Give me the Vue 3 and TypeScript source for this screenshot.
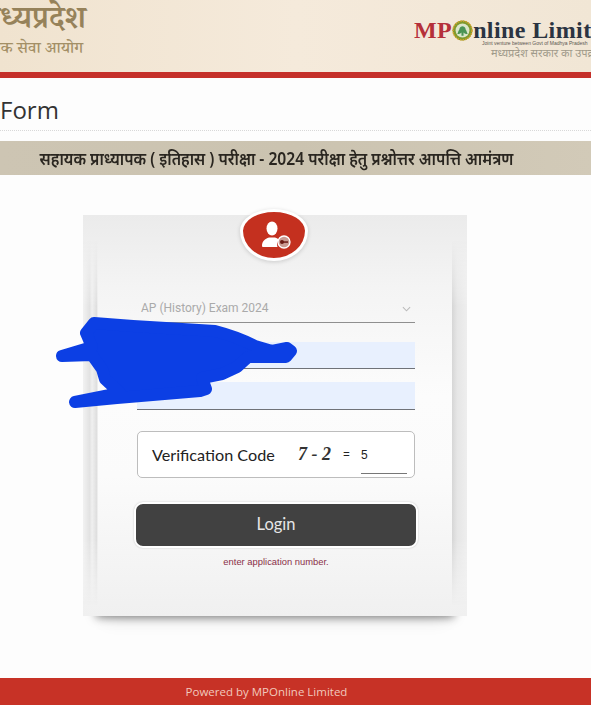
<script setup lang="ts">
const title: string = 'सहायक प्राध्यापक ( इतिहास ) परीक्षा - 2024 परीक्षा हेतु प्रश्नोत्तर आपत्ति आमंत्रण'
</script>

<template>
  <div class="page">
    <header class="top">
      <div class="brand-left">
        <div class="hi-big">मध्यप्रदेश</div>
        <div class="hi-small">लोक सेवा आयोग</div>
      </div>
      <div class="brand-right">
        <div class="mp">
          <span class="red">MP</span>
          <svg class="seal" viewBox="0 0 20 20" aria-hidden="true">
            <circle cx="10" cy="10" r="9.500" fill="#7f9a2c" />
            <circle cx="10" cy="10" r="9" fill="none" stroke="#d3a32e" stroke-width="1.400" stroke-dasharray="1.500 1" />
            <circle cx="10" cy="10" r="6.600" fill="#dbe6cb" />
            <path d="M5 13c1-1 1-3 2-4 0-2 2-3 3-3s3 1 3 3c1 1 1 3 2 4-2 1-3 0-4-1v3H9v-3c-1 1-2 2-4 1z" fill="#4a9455" />
          </svg>
          <span class="navy">nline Limited</span>
        </div>
        <div class="jv">Joint venture between Govt of Madhya Pradesh</div>
        <div class="hi-gov">मध्यप्रदेश सरकार का उपक्रम</div>
      </div>
    </header>

    <h1 class="form-title">Form</h1>

    <div class="band"><span class="band-text">{{ title }}</span></div>

    <main class="stage">
      <section class="card">
        <div class="badge">
          <svg viewBox="0 0 46 30" width="46" height="30" aria-hidden="true">
            <ellipse cx="21" cy="8.500" rx="5.500" ry="7" fill="#fff" />
            <path d="M11 26c0-5 3-7 7-8.500h6c2 .5 3 1.200 4 2.500-2 2-2.500 4-1.500 7H12.500c-1 0-1.500-.3-1.500-1z" fill="#fff" />
            <circle cx="33" cy="22" r="6" fill="#c99a92" stroke="#fff" stroke-width="1.300" />
            <circle cx="31" cy="22" r="2" fill="#6a1a14" />
            <rect x="31.500" y="21.300" width="5.500" height="1.500" fill="#6a1a14" />
          </svg>
        </div>

        <div class="fields">
          <div class="select">
            <span>AP (History) Exam 2024</span>
            <svg class="chev" viewBox="0 0 10 6" width="9" height="6" aria-hidden="true">
              <path d="M1 1l4 4 4-4" fill="none" stroke="#bbb" stroke-width="1.200" />
            </svg>
          </div>
          <div class="input"></div>
          <div class="input second"></div>

          <div class="captcha">
            <span class="cap-label">Verification Code</span>
            <span class="cap-sum">7 - 2</span>
            <span class="cap-eq">=</span>
            <span class="cap-answer">5</span>
          </div>

          <button class="login" type="button">Login</button>
          <p class="error">enter application number.</p>
        </div>
      </section>

      <svg class="scribble" viewBox="0 0 250 100" width="250" height="100" aria-hidden="true">
        <path d="M44 14L83 17L165 22Q188 28 205 37L222 42L237 39L241 42L236 48L198 48L187 58L172 65L152 69L156 80L150 82L67 89L25 93L70 84L55 70L52 60L42 46L12 47L42 38L36 24Z" fill="#0c3fe4" stroke="#0c3fe4" stroke-width="12" stroke-linejoin="round" />
      </svg>
    </main>

    <footer class="foot">Powered by MPOnline Limited</footer>
  </div>
</template>

<style>
html, body { margin: 0; background: #fdfdfd; }
</style>

<style scoped>
.page {
  width: 591px;
  height: 705px;
  overflow: hidden;
  display: flex;
  flex-direction: column;
  background: #fdfdfd;
  font-family: "Noto Sans", "DejaVu Sans", sans-serif;
}
.top {
  height: 72px;
  flex: none;
  display: flex;
  justify-content: space-between;
  border-bottom: 6px solid #c5302a;
  background: linear-gradient(90deg, #f0e3cf 0%, #f5eadb 50%, #f1e6d5 100%);
  overflow: hidden;
}
.brand-left {
  width: 86px;
  padding-top: 3px;
  display: flex;
  flex-direction: column;
  align-items: flex-end;
  white-space: nowrap;
  color: #96825a;
  font-family: "Noto Serif Devanagari", "Noto Sans", "DejaVu Serif", serif;
}
.hi-big { font-size: 32px; line-height: 40px; font-weight: 600; }
.hi-small { font-size: 16.5px; line-height: 15px; font-weight: 500; margin-right: 3px; color: #a38f66; }
.brand-right {
  width: 177px;
  padding-top: 18px;
  white-space: nowrap;
  overflow: hidden;
}
.mp {
  display: flex;
  align-items: center;
  height: 24px;
  font-family: "Liberation Serif", serif;
  font-size: 24px;
  font-weight: 700;
  letter-spacing: 0.4px;
}
.red { color: #b5303a; }
.navy { color: #2b3442; }
.seal { width: 21px; height: 21px; flex: none; }
.jv {
  margin: -2px 0 0 68px;
  font-family: "Liberation Sans", sans-serif;
  font-size: 5px;
  line-height: 6px;
  color: #5a5650;
}
.hi-gov {
  margin-left: 77px;
  font-size: 11px;
  line-height: 13px;
  color: #a09a8a;
}
.form-title {
  margin: 0;
  height: 53px;
  flex: none;
  padding: 14px 0 0;
  box-sizing: border-box;
  border-bottom: 1px dotted #d8d8d8;
  font-size: 24px;
  line-height: 36px;
  font-weight: 400;
  color: #333;
  font-family: "Open Sans", "Noto Sans", sans-serif;
}
.band {
  margin-top: 10px;
  height: 34px;
  flex: none;
  display: flex;
  align-items: center;
  justify-content: center;
  background: linear-gradient(90deg, #cdc5b3 0%, #cbc3b0 50%, #d2cab8 100%);
  color: #2a2620;
  white-space: nowrap;
}
.band-text {
  font-size: 17px;
  font-weight: 600;
  transform: scaleX(0.92);
  flex: none;
  margin-left: -39px;
}
.stage {
  position: relative;
  flex: 1;
  padding: 40px 0 0 83px;
}
.card {
  position: relative;
  width: 384px;
  height: 401px;
  box-sizing: border-box;
  padding: 86px 52px 0 54px;
  background: linear-gradient(180deg, #ebebeb 0%, #f4f4f4 18%, #fcfcfc 45%, #fbfbfb 65%, #f0f0f0 100%);
  box-shadow: 0 14px 9px -13px rgba(0, 0, 0, 0.5), 0 24px 18px -22px rgba(0, 0, 0, 0.12);
}
.card::before,
.card::after {
  content: "";
  position: absolute;
  top: 25px;
  bottom: 10px;
  width: 15px;
  -webkit-mask-image: linear-gradient(180deg, transparent 0%, #000 18%, #000 82%, transparent 100%);
  mask-image: linear-gradient(180deg, transparent 0%, #000 18%, #000 82%, transparent 100%);
}
.card::before {
  left: 0;
  background: linear-gradient(90deg, #f2f2f2 0%, #e2e2e2 45%, #f0f0f0 60%, #dedede 92%, #f8f8f8 100%);
}
.card::after {
  right: 0;
  background: linear-gradient(90deg, #d6d6d6 0%, #e6e6e6 35%, #eeeeee 100%);
}
.badge {
  position: absolute;
  left: 157px;
  top: -6px;
  width: 62px;
  height: 46px;
  display: flex;
  align-items: center;
  justify-content: center;
  border-radius: 50% 50% 50% 50% / 42% 42% 58% 58%;
  background: #c4301f;
  border: 3px solid #fff;
  box-shadow: 0 1px 4px rgba(0, 0, 0, 0.16);
}
.fields {
  position: relative;
  z-index: 1;
  display: flex;
  flex-direction: column;
}
.select {
  height: 21px;
  display: flex;
  align-items: flex-start;
  justify-content: space-between;
  padding: 0 4px;
  border-bottom: 1px solid #8f8f8f;
  color: #aaa;
  font-family: "Roboto", sans-serif;
  font-size: 12px;
  line-height: 15px;
}
.chev { margin: 5px 0 0 0; }
.input {
  height: 26px;
  margin-top: 19px;
  background: #e8f0fe;
  border-bottom: 1px solid #6f7278;
}
.second { height: 27px; margin-top: 13px; }
.captcha {
  margin-top: 21px;
  height: 47px;
  box-sizing: border-box;
  display: flex;
  align-items: center;
  background: #fff;
  border: 1px solid #bdbdbd;
  border-radius: 5px;
  padding-left: 14px;
  color: #222;
}
.cap-label {
  width: 146px;
  flex: none;
  font-family: "Lato", sans-serif;
  font-size: 16.2px;
}
.cap-sum {
  width: 45px;
  flex: none;
  font-family: "Liberation Serif", serif;
  font-size: 18px;
  font-weight: 700;
  font-style: italic;
  color: #333;
}
.cap-eq { width: 18px; flex: none; font-size: 12px; }
.cap-answer {
  align-self: flex-start;
  width: 46px;
  height: 42px;
  box-sizing: border-box;
  padding-top: 14px;
  border-bottom: 1px solid #777;
  font-family: "Liberation Sans", sans-serif;
  font-size: 12px;
  line-height: 18px;
}
.login {
  margin: 24px -3px 0 -3px;
  height: 46px;
  box-sizing: border-box;
  border: 2px solid #fff;
  border-radius: 9px;
  padding-bottom: 3px;
  background: #414141;
  color: #e6e6e6;
  font-family: "Lato", sans-serif;
  font-size: 16.5px;
  box-shadow: 0 0 2px rgba(0, 0, 0, 0.2);
}
.error {
  margin: 8px 0 0;
  text-align: center;
  font-family: "Liberation Sans", sans-serif;
  font-size: 9.4px;
  line-height: 11px;
  color: #8a2f48;
}
.scribble {
  position: absolute;
  left: 50px;
  top: 134px;
  z-index: 2;
}
.foot {
  height: 27px;
  flex: none;
  display: flex;
  align-items: center;
  justify-content: center;
  padding-right: 58px;
  background: #c73226;
  color: #f1c9bd;
  font-family: "Open Sans", sans-serif;
  font-size: 11.5px;
}
</style>
